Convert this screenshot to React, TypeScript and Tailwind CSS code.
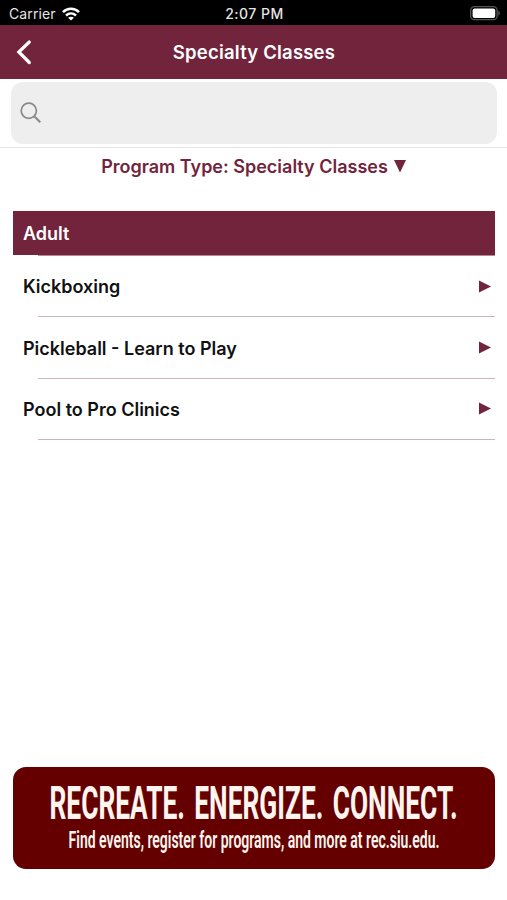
import React from "react";

interface Program {
  id: number;
  name: string;
}

const programs: Program[] = [
  { id: 1, name: "Kickboxing" },
  { id: 2, name: "Pickleball - Learn to Play" },
  { id: 3, name: "Pool to Pro Clinics" },
];

const StatusBar: React.FC = () => (
  <div className="grid h-[25px] shrink-0 grid-cols-3 items-center bg-black pt-[2px] pl-[9px] pr-[7px] text-[14px] leading-none text-[#e4e4e4]">
    <div className="flex items-center gap-[6px]">
      <span className="tracking-[0.1px]">Carrier</span>
      <svg width="18" height="14" viewBox="0 0 18 14" fill="none" stroke="#fff" strokeWidth="2.6">
        <path d="M1 5.1C5.5 .6 12.5 .6 17 5.1" />
        <path d="M4 8.5C7 5.8 11 5.8 14 8.5" />
        <path d="M9 13.5L6.1 10.7C7.7 9.3 10.3 9.3 11.9 10.7Z" fill="#fff" stroke="none" />
      </svg>
    </div>
    <span className="text-center font-medium tracking-[0.5px] whitespace-nowrap">2:07 PM</span>
    <svg className="justify-self-end" width="30" height="15" viewBox="0 0 30 15">
      <rect x="0.7" y="0.7" width="26.4" height="13" rx="3.8" fill="none" stroke="#555" strokeWidth="1.3" />
      <rect x="2.6" y="2.5" width="22.6" height="9.4" rx="2" fill="#fff" />
      <path d="M28.3 4.8C30.3 5.8 30.3 8.6 28.3 9.6Z" fill="#5d5d5d" />
    </svg>
  </div>
);

const App: React.FC = () => {
  return (
    <div className="flex h-[900px] w-[507px] flex-col overflow-hidden bg-white font-['Inter',sans-serif]">
      <StatusBar />

      <header className="grid h-[54px] shrink-0 grid-cols-[60px_1fr_60px] items-center bg-[#72243d] text-white">
        <button className="pl-[14px]">
          <svg width="18" height="26" viewBox="0 0 18 26" fill="none" stroke="#fff" strokeWidth="3.2">
            <path d="M15.3 3L4.8 13L15.3 23.5" strokeLinecap="round" strokeLinejoin="miter" />
          </svg>
        </button>
        <h1 className="pt-[2px] pl-px text-center text-[18.5px] font-semibold tracking-[0.2px]">Specialty Classes</h1>
      </header>

      <div className="h-[69px] shrink-0 border-b border-[#e6e6e6] pt-[3px] pr-[10px] pl-[11px]">
        <label className="flex h-[62px] items-center rounded-[12px] bg-[#eeeeee] pl-[9px]">
          <svg width="22" height="22" viewBox="0 0 22 22" fill="none" stroke="#8a8a8d" strokeWidth="1.7">
            <circle cx="8.8" cy="8.8" r="7.6" />
            <path d="M14.2 14.2L20.3 20.3" strokeWidth="2.1" />
          </svg>
          <input className="min-w-0 flex-1 bg-transparent px-2 outline-none" />
        </label>
      </div>

      <button className="flex h-[63px] shrink-0 items-start justify-center gap-[6px] pt-[7px] text-[18px] leading-[23px] font-semibold text-[#72243d]">
        <span>Program Type: Specialty Classes</span>
        <svg className="mt-[5px]" width="12" height="13" viewBox="0 0 12 13" fill="#72243d">
          <path d="M0 0H12L6 12.5Z" />
        </svg>
      </button>

      <section className="mr-[12px] ml-[13px]">
        <h2 className="flex h-[44px] items-center bg-[#72243d] pt-px pl-[10px] text-[18px] font-semibold text-white">
          <span>Adult</span>
        </h2>
        <div className="ml-[25px] h-px bg-[#b48a98]" />
        <ul>
          {programs.map((program) => (
            <li key={program.id}>
              <div className="flex h-[60.3px] items-center justify-between pr-[4.5px] pl-[10px]">
                <span className="pt-[1.5px] text-[18px] font-semibold text-[#111]">{program.name}</span>
                <svg width="12" height="13" viewBox="0 0 12 13" fill="#72243d">
                  <path d="M0 .5L12 6.5L0 12.5Z" />
                </svg>
              </div>
              <div className="ml-[25px] h-px bg-[#cfb3bc]" />
            </li>
          ))}
        </ul>
      </section>

      <footer className="mt-auto mr-[12px] mb-[31px] ml-[13px] flex h-[102px] shrink-0 flex-col items-center rounded-[13px] bg-[#640000] pt-[12px] font-['Roboto',sans-serif] text-[#fff5ee]">
        <span className="block h-[49px] scale-x-[0.566] text-[46.5px] leading-[48px] font-bold [word-spacing:5px] whitespace-nowrap">
          RECREATE. ENERGIZE. CONNECT.
        </span>
        <span className="block scale-x-[0.608] text-[23px] leading-[26px] font-semibold whitespace-nowrap">
          Find events, register for programs, and more at rec.siu.edu.
        </span>
      </footer>
    </div>
  );
};

export default App;
